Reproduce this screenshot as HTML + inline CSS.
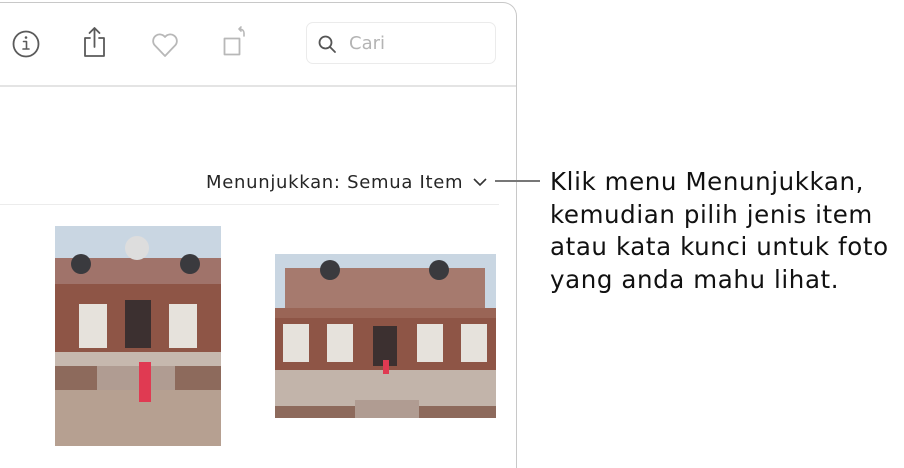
<!DOCTYPE html>
<html><head><meta charset="utf-8"><style>
html,body{margin:0;width:904px;height:468px;overflow:hidden}
body{background:#fff;position:relative;font-family:"DejaVu Sans","Liberation Sans",sans-serif}
.win{position:absolute;left:-20px;top:2px;width:537px;height:466px;border:1px solid #c8c8c8;border-bottom:none;border-radius:0 14px 0 0;box-sizing:border-box}
.sep1{position:absolute;left:0;top:85px;width:516px;height:2px;background:#e4e4e4}
.sep2{position:absolute;left:0;top:204px;width:499px;height:1px;background:#ececec}
.search{position:absolute;left:306px;top:22px;width:190px;height:42px;border:1px solid #ebebeb;border-radius:7px;box-sizing:border-box}
.search span{position:absolute;left:42px;top:10px;font-size:18px;color:#b4b4b4}
.show{position:absolute;left:206px;top:172px;font-size:18px;letter-spacing:0.7px;color:#262626;white-space:nowrap}
.call{position:absolute;left:550px;top:166px;font-size:24.5px;line-height:32.6px;letter-spacing:0.6px;color:#111;white-space:nowrap}
.ln{position:absolute;left:495px;top:180px;width:45px;height:1.5px;background:#777}
</style></head><body>
<div class="win"></div>
<div class="sep1"></div><div class="sep2"></div>
<svg style="position:absolute;left:0;top:0" width="260" height="80" fill="none" stroke-linecap="round" stroke-linejoin="round">
<circle cx="26" cy="44" r="12.5" stroke="#5a5a5a" stroke-width="1.8"/>
<circle cx="26" cy="37.5" r="1.3" fill="#5a5a5a" stroke="none"/>
<path d="M23.5 41.5h3v7.5M23 49h6" stroke="#5a5a5a" stroke-width="1.6"/>
<path d="M90 38h-5v18h19V38h-5M94.5 47V28M89.5 33l5-5 5 5" stroke="#5a5a5a" stroke-width="1.8"/>
<path d="M165 56L154.5 45a6.5 6.5 0 0 1 10.5-8a6.5 6.5 0 0 1 10.5 8z" stroke="#b8b8b8" stroke-width="1.8"/>
<rect x="224.5" y="38.5" width="15" height="16" stroke="#b8b8b8" stroke-width="1.8"/>
<path d="M244 36v-3a4 4 0 0 0-4-4h-1M241 27l-2 2 2 2" stroke="#b8b8b8" stroke-width="1.6"/>
</svg>
<div class="search"><svg style="position:absolute;left:10px;top:11px" width="22" height="22" fill="none" stroke="#555" stroke-width="1.8" stroke-linecap="round"><circle cx="8.5" cy="8.5" r="6"/><path d="M13 13l5 5"/></svg><span>Cari</span></div>
<div class="show">Menunjukkan: Semua Item</div>
<svg style="position:absolute;left:472px;top:177px" width="16" height="10" fill="none" stroke="#333" stroke-width="1.6"><path d="M2 2l6 6 6-6"/></svg>
<div class="ln"></div>
<div class="call">Klik menu Menunjukkan,<br>kemudian pilih jenis item<br>atau kata kunci untuk foto<br>yang anda mahu lihat.</div>
<svg style="position:absolute;left:55px;top:226px" width="166" height="220">
<rect width="166" height="220" fill="#c9d6e2"/>
<rect y="32" width="166" height="28" fill="#a0736a"/>
<circle cx="26" cy="38" r="10" fill="#3a3a3e"/><circle cx="135" cy="38" r="10" fill="#3a3a3e"/><circle cx="82" cy="22" r="12" fill="#ddd"/>
<rect y="58" width="166" height="68" fill="#8e5546"/>
<rect x="24" y="78" width="28" height="44" fill="#e6e2dc"/><rect x="114" y="78" width="28" height="44" fill="#e6e2dc"/><rect x="70" y="74" width="26" height="48" fill="#3c3030"/>
<rect y="126" width="166" height="14" fill="#c6b8ae"/>
<rect y="140" width="166" height="24" fill="#8d6a5c"/><rect x="42" y="140" width="78" height="24" fill="#b09c92"/>
<rect y="164" width="166" height="56" fill="#b6a091"/>
<rect x="84" y="136" width="12" height="40" fill="#e03a52"/>
</svg>
<svg style="position:absolute;left:275px;top:254px" width="221" height="164">
<rect width="221" height="164" fill="#c9d6e2"/>
<rect x="10" y="14" width="200" height="40" fill="#a67a6e"/>
<circle cx="55" cy="16" r="10" fill="#3a3a3e"/><circle cx="164" cy="16" r="10" fill="#3a3a3e"/>
<rect y="54" width="221" height="10" fill="#9a6556"/>
<rect y="64" width="221" height="85" fill="#8e5546"/>
<rect x="8" y="70" width="26" height="38" fill="#e6e2dc"/><rect x="52" y="70" width="26" height="38" fill="#e6e2dc"/><rect x="98" y="72" width="24" height="40" fill="#3c3030"/><rect x="142" y="70" width="26" height="38" fill="#e6e2dc"/><rect x="186" y="70" width="26" height="38" fill="#e6e2dc"/>
<rect y="116" width="221" height="36" fill="#c2b4aa"/>
<rect y="152" width="221" height="12" fill="#8d6a5c"/><rect x="80" y="146" width="64" height="18" fill="#b09c92"/>
<rect x="108" y="106" width="6" height="14" fill="#e03a52"/>
</svg>
</body></html>
